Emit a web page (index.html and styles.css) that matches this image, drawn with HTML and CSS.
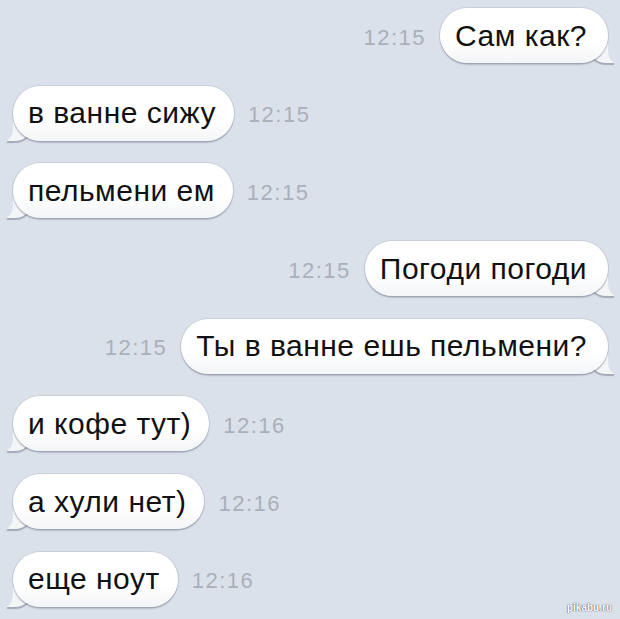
FILE: index.html
```html
<!DOCTYPE html>
<html lang="ru">
<head>
    <meta charset="UTF-8">
    <meta name="viewport" content="width=device-width, initial-scale=1.0">
    <title>Сообщения</title>
    <link rel="stylesheet" href="styles.css">
</head>
<body>
    <!-- Chat -->
    <div class="chat">
        <div class="row out">
            <span class="time">12:15</span>
            <div class="bubble">Сам как?</div>
        </div>
        <div class="row in">
            <div class="bubble">в ванне сижу</div>
            <span class="time">12:15</span>
        </div>
        <div class="row in">
            <div class="bubble">пельмени ем</div>
            <span class="time">12:15</span>
        </div>
        <div class="row out">
            <span class="time">12:15</span>
            <div class="bubble">Погоди погоди</div>
        </div>
        <div class="row out">
            <span class="time">12:15</span>
            <div class="bubble">Ты в ванне ешь пельмени?</div>
        </div>
        <div class="row in">
            <div class="bubble">и кофе тут)</div>
            <span class="time">12:16</span>
        </div>
        <div class="row in">
            <div class="bubble">а хули нет)</div>
            <span class="time">12:16</span>
        </div>
        <div class="row in">
            <div class="bubble">еще ноут</div>
            <span class="time">12:16</span>
        </div>
    </div>

    <div class="watermark">pikabu.ru</div>
</body>
</html>
```

FILE: styles.css
```css
body {
    margin: 0;
    padding: 0;
    height: 619px;
    overflow: hidden;
    position: relative;
    background: #dbe1ea;
    font-family: 'Liberation Sans', Arial, sans-serif;
    color: #111;
}

.chat {
    display: flex;
    flex-direction: column;
    gap: 22.7px;
    padding: 8px 12px 0 13px;
}

.row {
    display: flex;
    align-items: center;
    gap: 14px;
    height: 55px;
}

.row.out {
    justify-content: flex-end;
}

.bubble {
    position: relative;
    height: 55px;
    box-sizing: border-box;
    display: flex;
    align-items: center;
    padding: 0 18px 0 15px;
    background: linear-gradient(#ffffff 60%, #f4f5f7);
    border-radius: 28px;
    font-size: 30px;
    letter-spacing: 0.5px;
    box-shadow: 0 0 0 1px rgba(150, 160, 175, 0.25), 0 1.5px 1.5px rgba(60, 70, 90, 0.4);
}

.row.out .bubble {
    padding: 0 21px 0 15px;
}

/* tails */
.bubble::before,
.bubble::after {
    content: "";
    position: absolute;
    bottom: 0;
    height: 20px;
    z-index: -1;
}

.row.in .bubble::before {
    left: -6px;
    width: 24px;
    background: #f4f5f7;
    border-bottom-right-radius: 16px 14px;
    box-shadow: 0 1.5px 1px rgba(60, 70, 90, 0.35);
}

.row.in .bubble::after {
    left: -11px;
    width: 11px;
    background: #dbe1ea;
    border-bottom-right-radius: 9px 12px;
}

.row.out .bubble::before {
    right: -6px;
    width: 24px;
    background: #f4f5f7;
    border-bottom-left-radius: 16px 14px;
    box-shadow: 0 1.5px 1px rgba(60, 70, 90, 0.35);
}

.row.out .bubble::after {
    right: -11px;
    width: 11px;
    background: #dbe1ea;
    border-bottom-left-radius: 9px 12px;
}

.time {
    font-size: 22px;
    letter-spacing: 1.5px;
    color: #a9b0bb;
    padding-top: 4px;
}

.watermark {
    position: absolute;
    right: 8px;
    bottom: 6px;
    font-size: 10px;
    font-weight: 700;
    color: #fff;
    text-shadow: 0 0 1px #555, 0 0 1px #555;
}
```
